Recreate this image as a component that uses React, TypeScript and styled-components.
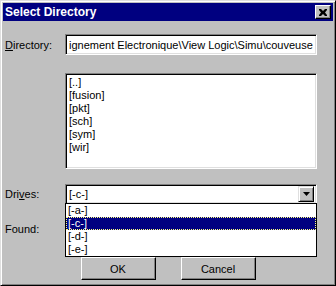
import React from "react";
import styled, { createGlobalStyle } from "styled-components";

const Global = createGlobalStyle`
  html, body { margin: 0; padding: 0; background: #c0c0c0; }
  body { font-family: "Liberation Sans", Arial, sans-serif; font-size: 11px; color: #000; }
`;

const Window = styled.div`
  width: 336px;
  height: 286px;
  box-sizing: border-box;
  background: #c0c0c0;
  border-top: 1px solid #dfdfdf;
  border-left: 1px solid #dfdfdf;
  border-right: 1px solid #000;
  border-bottom: 1px solid #000;
  box-shadow: inset 1px 1px 0 #fff, inset -1px -1px 0 #808080;
  padding: 2px;
  display: flex;
  flex-direction: column;
`;

const TitleBar = styled.div`
  height: 18px;
  background: #000080;
  display: flex;
  align-items: center;
  justify-content: space-between;
  padding: 0 2px 0 2px;
`;

const Title = styled.span`
  color: #fff;
  font-weight: bold;
  font-size: 12px;
  letter-spacing: 0;
`;

const CloseButton = styled.div`
  width: 16px;
  height: 14px;
  box-sizing: border-box;
  background: #c0c0c0;
  border-top: 1px solid #fff;
  border-left: 1px solid #fff;
  border-right: 1px solid #000;
  border-bottom: 1px solid #000;
  box-shadow: inset -1px -1px 0 #808080;
  display: flex;
  align-items: center;
  justify-content: center;
`;

const Content = styled.div`
  padding-left: 2px;
  display: flex;
  flex-direction: column;
`;

const Row = styled.div<{ $top: number; $h: number }>`
  display: grid;
  grid-template-columns: 60px 252px;
  align-items: center;
  margin-top: ${(p) => p.$top}px;
  height: ${(p) => p.$h}px;
`;

const Label = styled.span``;

const U = styled.span`
  text-decoration: underline;
`;

const Sunken = styled.div`
  box-sizing: border-box;
  background: #fff;
  border-top: 1px solid #808080;
  border-left: 1px solid #808080;
  border-right: 1px solid #fff;
  border-bottom: 1px solid #fff;
  box-shadow: inset 1px 1px 0 #000, inset -1px -1px 0 #dfdfdf;
`;

const Input = styled(Sunken)`
  height: 21px;
  padding: 0 3px;
  display: flex;
  align-items: center;
  white-space: nowrap;
  overflow: hidden;
`;

const ListBox = styled(Sunken)`
  height: 96px;
  padding: 2px 3px;
  align-self: start;
`;

const ListItem = styled.div`
  height: 13px;
  line-height: 13px;
`;

const Combo = styled(Sunken)`
  position: relative;
  height: 20px;
  display: flex;
  align-items: center;
  padding: 0 2px 0 3px;
`;

const ComboText = styled.span`
  flex: 1;
`;

const ArrowButton = styled.div`
  width: 16px;
  height: 16px;
  box-sizing: border-box;
  background: #c0c0c0;
  border-top: 1px solid #dfdfdf;
  border-left: 1px solid #dfdfdf;
  border-right: 1px solid #000;
  border-bottom: 1px solid #000;
  box-shadow: inset 1px 1px 0 #fff, inset -1px -1px 0 #808080;
  display: flex;
  align-items: center;
  justify-content: center;
`;

const DropList = styled.div`
  position: absolute;
  top: 100%;
  left: -1px;
  width: 252px;
  box-sizing: border-box;
  background: #fff;
  border: 1px solid #000;
  z-index: 5;
`;

const DropItem = styled.div<{ $sel?: boolean }>`
  height: 13px;
  line-height: 13px;
  padding-left: 2px;
  background: ${(p) => (p.$sel ? "#000080" : "#fff")};
  color: ${(p) => (p.$sel ? "#fff" : "#000")};
  outline: ${(p) => (p.$sel ? "1px dotted #ffff80" : "none")};
  outline-offset: -1px;
`;

const ButtonRow = styled.div`
  display: flex;
  justify-content: center;
  gap: 25px;
  margin-top: 18px;
`;

const Button = styled.div`
  width: 75px;
  height: 23px;
  box-sizing: border-box;
  background: #c0c0c0;
  border-top: 1px solid #fff;
  border-left: 1px solid #fff;
  border-right: 1px solid #000;
  border-bottom: 1px solid #000;
  box-shadow: inset -1px -1px 0 #808080;
  display: flex;
  align-items: center;
  justify-content: center;
`;

const dirs = ["[..]", "[fusion]", "[pkt]", "[sch]", "[sym]", "[wir]"];
const drives = ["[-a-]", "[-c-]", "[-d-]", "[-e-]"];

export default function App() {
  return (
    <>
      <Global />
      <Window>
        <TitleBar>
          <Title>Select Directory</Title>
          <CloseButton>
            <svg width="8" height="7" viewBox="0 0 8 7">
              <path d="M0 0h2l2 2 2-2h2v1L6 3.5 8 6v1H6L4 5 2 7H0V6l2-2.5L0 1z" fill="#000" />
            </svg>
          </CloseButton>
        </TitleBar>
        <Content>
          <Row $top={13} $h={21}>
            <Label>
              <U>D</U>irectory:
            </Label>
            <Input>ignement Electronique\View Logic\Simu\couveuse</Input>
          </Row>
          <Row $top={18} $h={96}>
            <span />
            <ListBox>
              {dirs.map((d) => (
                <ListItem key={d}>{d}</ListItem>
              ))}
            </ListBox>
          </Row>
          <Row $top={15} $h={20}>
            <Label>
              Dri<U>v</U>es:
            </Label>
            <Combo>
              <ComboText>[-c-]</ComboText>
              <ArrowButton>
                <svg width="7" height="4" viewBox="0 0 7 4">
                  <path d="M0 0h7L3.5 4z" fill="#000" />
                </svg>
              </ArrowButton>
              <DropList>
                {drives.map((d) => (
                  <DropItem key={d} $sel={d === "[-c-]"}>
                    {d}
                  </DropItem>
                ))}
              </DropList>
            </Combo>
          </Row>
          <Row $top={15} $h={20}>
            <Label>Found:</Label>
            <span />
          </Row>
        </Content>
        <ButtonRow>
          <Button>OK</Button>
          <Button>Cancel</Button>
        </ButtonRow>
      </Window>
    </>
  );
}
